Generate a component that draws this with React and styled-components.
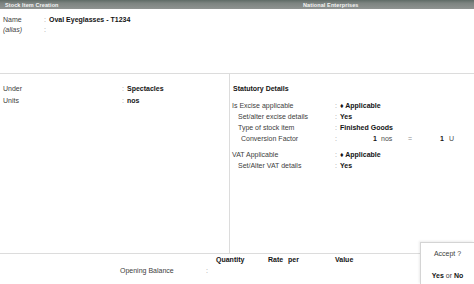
import React from "react";
import styled, { createGlobalStyle } from "styled-components";

const GlobalStyle = createGlobalStyle`
  html, body {
    margin: 0;
    padding: 0;
    background: #fff;
  }
  body {
    font-family: "Liberation Sans", Arial, sans-serif;
    width: 474px;
    height: 284px;
    overflow: hidden;
  }
`;

const Screen = styled.div`
  position: relative;
  display: flex;
  flex-direction: column;
  width: 474px;
  height: 284px;
  overflow: hidden;
  color: #3a3a3a;
  font-size: 7px;
`;

const TitleBar = styled.div`
  display: flex;
  align-items: center;
  height: 9px;
  flex: 0 0 9px;
  background: linear-gradient(#5f6b66, #7c8380 35%, #8f9391);
  color: #f4f4f4;
  font-size: 5.5px;
  font-weight: bold;
`;

const TitleText = styled.span`
  flex: 0 0 ${p => p.$width || "auto"};
  padding-left: ${p => p.$pad || 0}px;
  letter-spacing: 0.1px;
`;

const TopSection = styled.div`
  flex: 0 0 65px;
  padding-top: 5px;
  box-sizing: border-box;
  border-bottom: 1px solid #dcdcdc;
`;

const Middle = styled.div`
  display: flex;
  flex: 0 0 180px;
  border-bottom: 1px solid #dcdcdc;
  box-sizing: border-box;
`;

const LeftPane = styled.div`
  width: 229px;
  border-right: 1px solid #dcdcdc;
  padding-top: 8px;
`;

const RightPane = styled.div`
  flex: 1;
  padding: 9px 0 0 2px;
`;

const Row = styled.div`
  display: grid;
  grid-template-columns: ${p => p.$label}px 5px 1fr;
  align-items: center;
  height: ${p => p.$h ?? 11}px;
  padding-left: ${p => p.$indent ?? 3}px;
  margin-top: ${p => p.$gap ?? 0}px;
  white-space: nowrap;
`;

const Label = styled.span`
  color: #404040;
  font-style: ${p => (p.$italic ? "italic" : "normal")};
`;

const Colon = styled.span`
  color: #9a9a9a;
`;

const Value = styled.span`
  font-weight: bold;
  color: #141414;
`;

const Heading = styled.div`
  font-weight: bold;
  color: #141414;
  height: 11px;
  line-height: 11px;
  padding-left: 1px;
  margin-bottom: 6px;
`;

const Conversion = styled.span`
  display: grid;
  grid-template-columns: 37px 4px 22px 14px 27px 14px;
  align-items: center;
  white-space: nowrap;
`;

const Num = styled.span`
  font-weight: bold;
  color: #141414;
  text-align: right;
`;

const Unit = styled.span`
  color: #4a4a4a;
  padding-left: ${p => p.$pad || 0}px;
`;

const Equals = styled.span`
  color: #8a8a8a;
  text-align: center;
`;

const Bottom = styled.div`
  flex: 1;
`;

const ColumnHeads = styled.div`
  display: grid;
  grid-template-columns: 216px 52px 20px 47px 40px;
  align-items: center;
  height: 11px;
  font-weight: bold;
  color: #141414;
`;

const OpeningRow = styled.div`
  display: grid;
  grid-template-columns: 120px 86px 10px;
  align-items: center;
  height: 11px;
  color: #404040;
`;

const AcceptBox = styled.div`
  position: absolute;
  right: 0;
  bottom: 0;
  width: 53px;
  height: 41px;
  background: #fff;
  border-left: 1px solid #d4d4d4;
  border-top: 1px solid #d4d4d4;
  box-shadow: -1px -1px 2px rgba(0, 0, 0, 0.08);
  display: flex;
  flex-direction: column;
  align-items: center;
  color: #404040;
`;

const AcceptTitle = styled.div`
  margin-top: 6px;
  height: 10px;
  line-height: 10px;
`;

const AcceptChoice = styled.div`
  margin-top: 12px;
  line-height: 10px;
  white-space: nowrap;
  b {
    color: #141414;
  }
`;

export default function App() {
  return (
    <Screen>
      <GlobalStyle />
      <TitleBar>
        <TitleText $width="298px" $pad={5}>Stock Item Creation</TitleText>
        <TitleText>National Enterprises</TitleText>
      </TitleBar>

      <TopSection>
        <Row $label={41} $h={10}>
          <Label>Name</Label>
          <Colon>:</Colon>
          <Value>Oval Eyeglasses - T1234</Value>
        </Row>
        <Row $label={41} $h={10}>
          <Label $italic>(alias)</Label>
          <Colon>:</Colon>
          <span />
        </Row>
      </TopSection>

      <Middle>
        <LeftPane>
          <Row $label={119} $h={12}>
            <Label>Under</Label>
            <Colon>:</Colon>
            <Value>Spectacles</Value>
          </Row>
          <Row $label={119} $h={12}>
            <Label>Units</Label>
            <Colon>:</Colon>
            <Value>nos</Value>
          </Row>
        </LeftPane>

        <RightPane>
          <Heading>Statutory Details</Heading>
          <Row $label={103} $indent={0}>
            <Label>Is Excise applicable</Label>
            <Colon>:</Colon>
            <Value>♦ Applicable</Value>
          </Row>
          <Row $label={97} $indent={6}>
            <Label>Set/alter excise details</Label>
            <Colon>:</Colon>
            <Value>Yes</Value>
          </Row>
          <Row $label={97} $indent={6}>
            <Label>Type of stock item</Label>
            <Colon>:</Colon>
            <Value>Finished Goods</Value>
          </Row>
          <Row $label={94} $indent={9}>
            <Label>Conversion Factor</Label>
            <Colon>:</Colon>
            <Conversion>
              <Num>1</Num>
              <span />
              <Unit>nos</Unit>
              <Equals>=</Equals>
              <Num>1</Num>
              <Unit $pad={5}>U</Unit>
            </Conversion>
          </Row>
          <Row $label={103} $indent={0} $gap={5}>
            <Label>VAT Applicable</Label>
            <Colon>:</Colon>
            <Value>♦ Applicable</Value>
          </Row>
          <Row $label={97} $indent={6}>
            <Label>Set/Alter VAT details</Label>
            <Colon>:</Colon>
            <Value>Yes</Value>
          </Row>
        </RightPane>
      </Middle>

      <Bottom>
        <ColumnHeads>
          <span />
          <span>Quantity</span>
          <span>Rate</span>
          <span>per</span>
          <span>Value</span>
        </ColumnHeads>
        <OpeningRow>
          <span />
          <Label>Opening Balance</Label>
          <Colon>:</Colon>
        </OpeningRow>
      </Bottom>

      <AcceptBox>
        <AcceptTitle>Accept ?</AcceptTitle>
        <AcceptChoice>
          <b>Yes</b> or <b>No</b>
        </AcceptChoice>
      </AcceptBox>
    </Screen>
  );
}
